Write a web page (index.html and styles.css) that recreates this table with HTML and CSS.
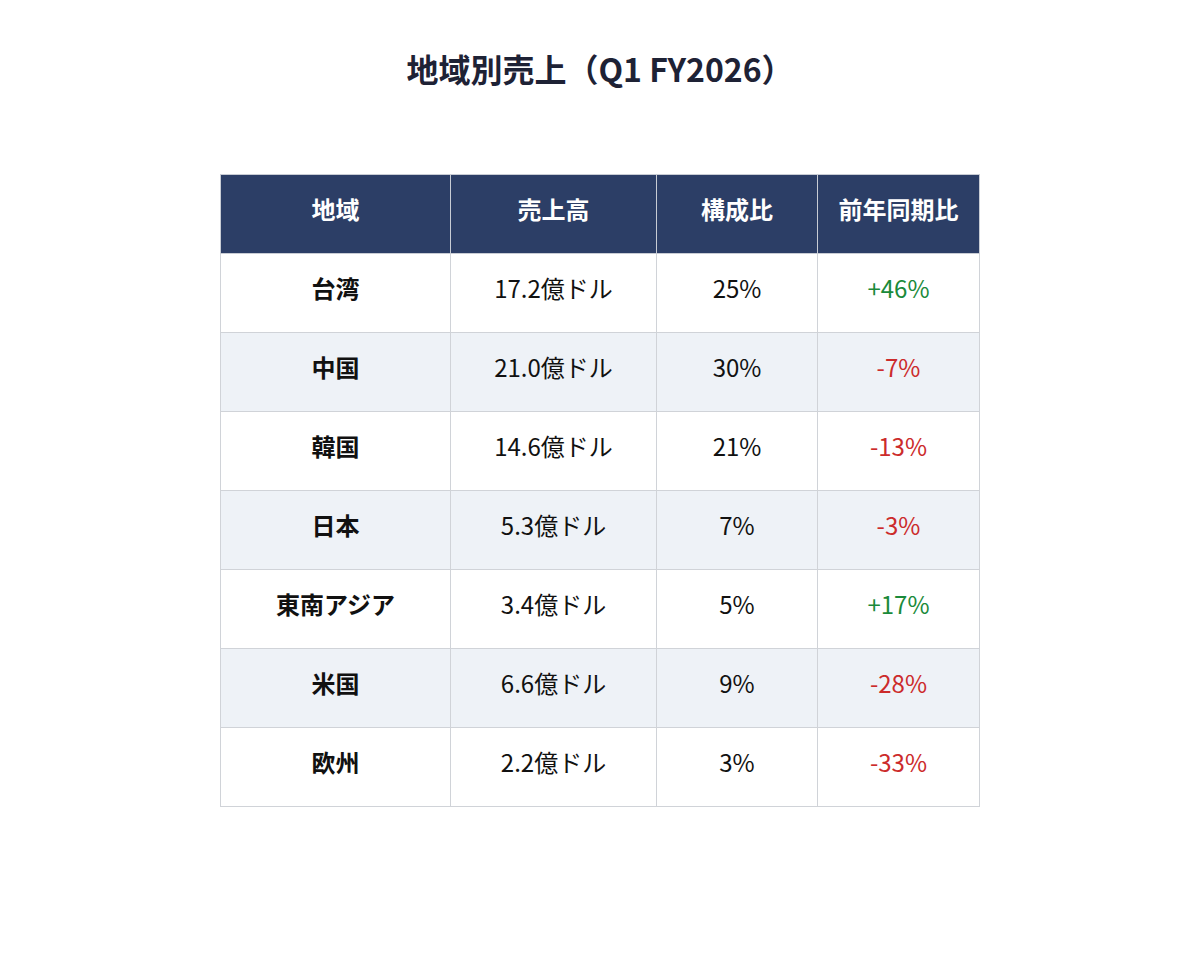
FILE: index.html
```html
<!DOCTYPE html>
<html lang="ja">
<head>
<meta charset="utf-8">
<title>地域別売上</title>
<link rel="stylesheet" href="styles.css">
</head>
<body>
<main class="page">
  <h1 class="title">地域別売上（Q1 FY2026）</h1>
  <table class="sales">
    <colgroup>
      <col class="c1"><col class="c2"><col class="c3"><col class="c4">
    </colgroup>
    <thead>
      <tr><th>地域</th><th>売上高</th><th>構成比</th><th>前年同期比</th></tr>
    </thead>
    <tbody>
      <tr><td class="region">台湾</td><td>17.2億ドル</td><td>25%</td><td class="up">+46%</td></tr>
      <tr><td class="region">中国</td><td>21.0億ドル</td><td>30%</td><td class="down">-7%</td></tr>
      <tr><td class="region">韓国</td><td>14.6億ドル</td><td>21%</td><td class="down">-13%</td></tr>
      <tr><td class="region">日本</td><td>5.3億ドル</td><td>7%</td><td class="down">-3%</td></tr>
      <tr><td class="region">東南アジア</td><td>3.4億ドル</td><td>5%</td><td class="up">+17%</td></tr>
      <tr><td class="region">米国</td><td>6.6億ドル</td><td>9%</td><td class="down">-28%</td></tr>
      <tr><td class="region">欧州</td><td>2.2億ドル</td><td>3%</td><td class="down">-33%</td></tr>
    </tbody>
  </table>
</main>
</body>
</html>
```

FILE: styles.css
```css
html, body {
  margin: 0;
  padding: 0;
  background: #ffffff;
}
body {
  font-family: "Noto Sans CJK JP", "Noto Sans", sans-serif;
  color: #111111;
}
.page {
  display: flex;
  flex-direction: column;
  align-items: center;
  padding-top: 46px;
}
.title {
  margin: 0 0 84px 0;
  font-size: 32px;
  line-height: 44px;
  font-weight: 700;
  color: #1e2235;
}
.sales {
  border-collapse: collapse;
  font-size: 24px;
}
.c1 { width: 230px; }
.c2 { width: 206px; }
.c3 { width: 161px; }
.c4 { width: 162px; }
.sales th,
.sales td {
  border: 1px solid #d0d3d8;
  text-align: center;
  vertical-align: middle;
  padding: 0 0 10px 0;
  height: 68px;
  line-height: 30px;
}
.sales th {
  background: #2c3e66;
  color: #ffffff;
  font-weight: 700;
  border-color: #c8ccd4;
}
.sales td {
  font-weight: 400;
  color: #111111;
}
.sales td.region {
  font-weight: 700;
}
.sales tbody tr:nth-child(even) td {
  background: #eef2f7;
}
.sales td.up { color: #1a8a3a; }
.sales td.down { color: #cc2b2b; }
```
